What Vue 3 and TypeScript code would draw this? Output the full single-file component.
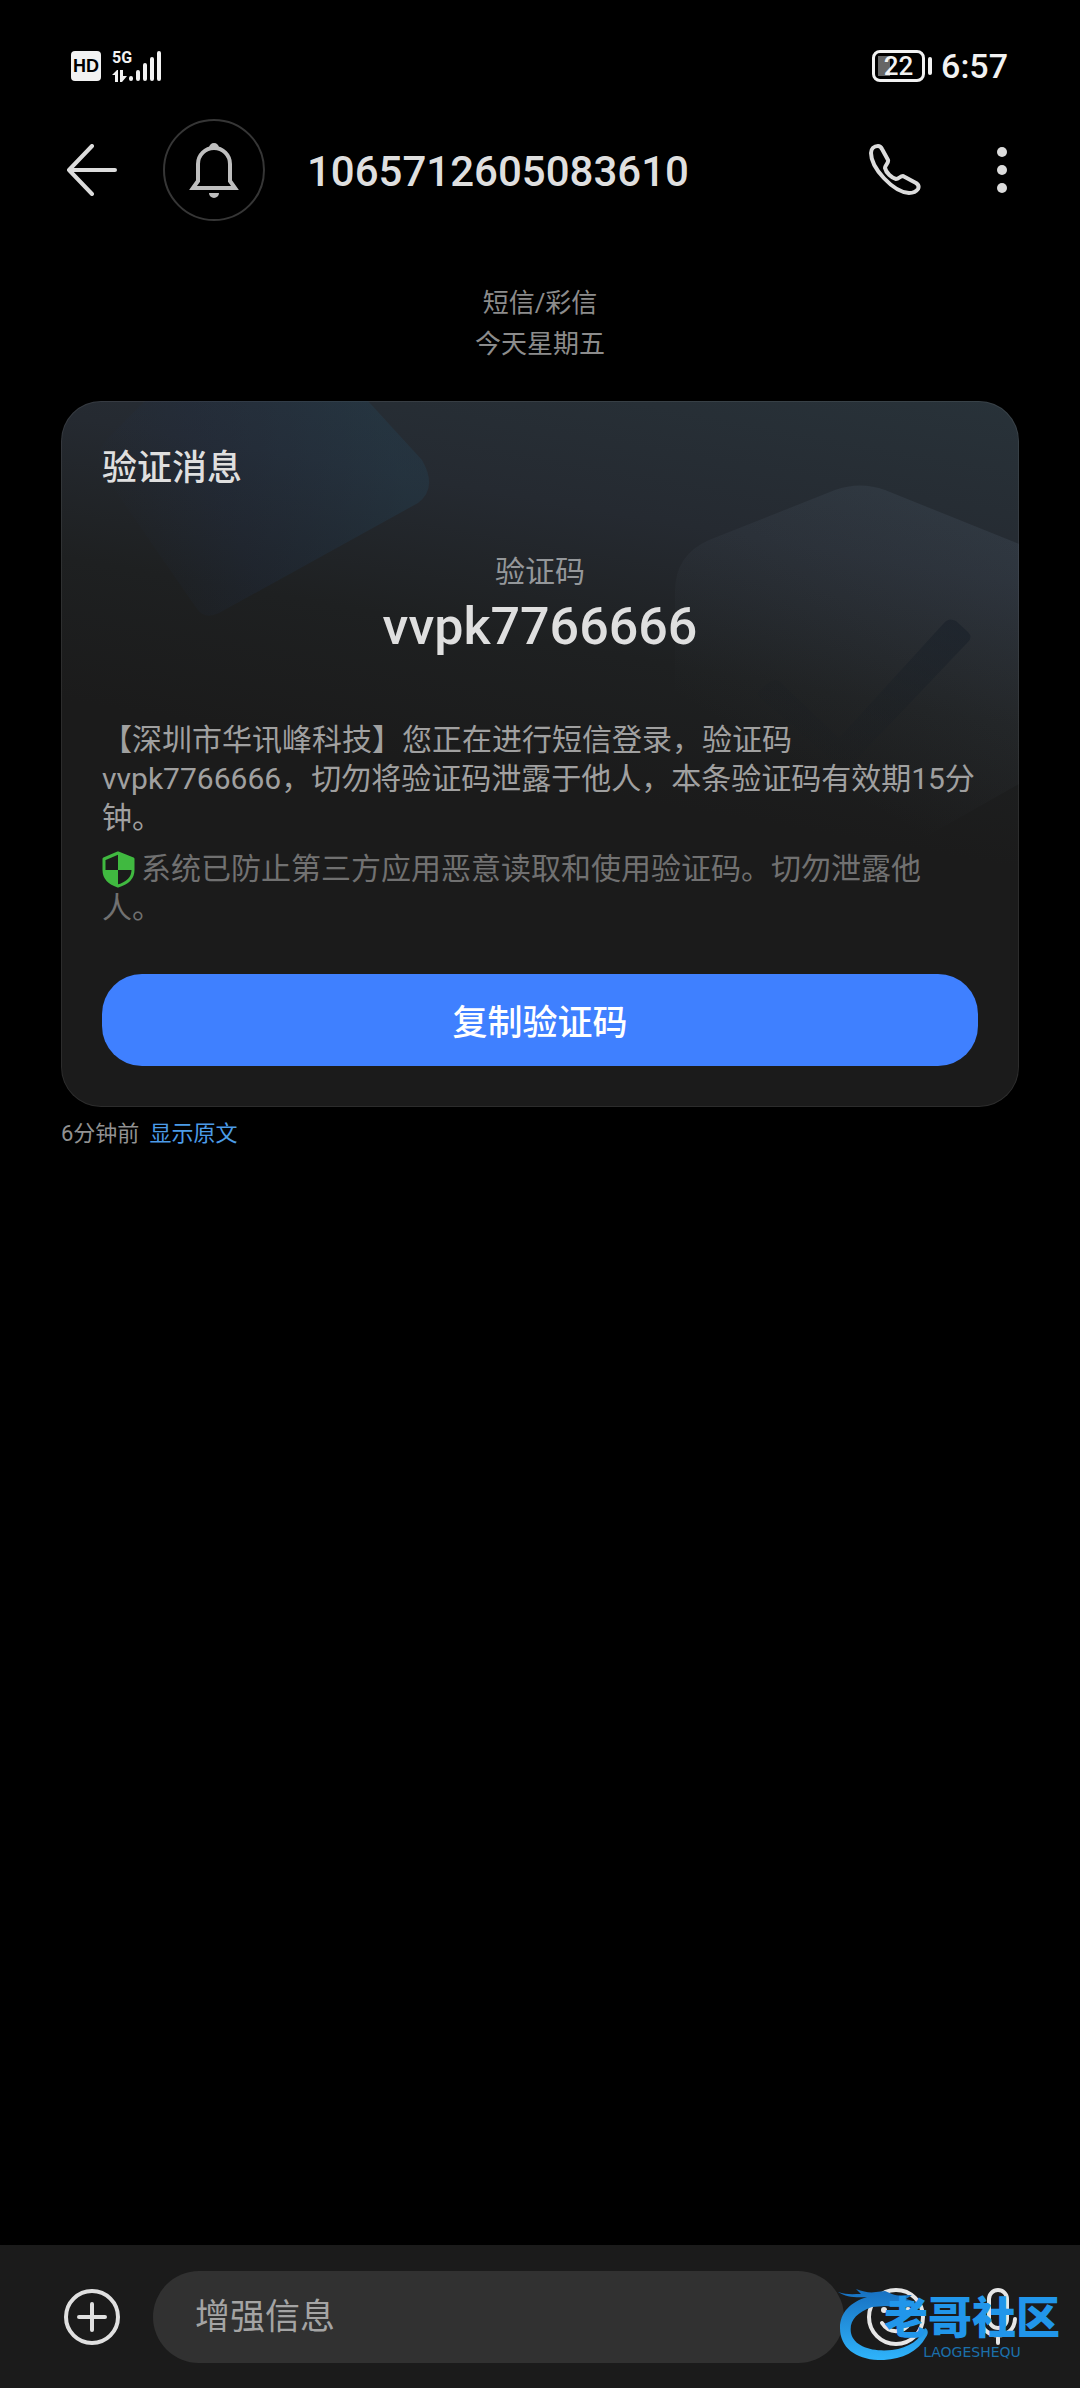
<script setup lang="ts">
import { ref } from 'vue'

const sender = '1065712605083610'
const code = 'vvpk7766666'
const draft = ref('')
const battery = 22

function copyCode(): void {
  navigator.clipboard?.writeText(code)
}
</script>

<template>
  <div class="screen">
    <div class="status">
      <div class="status-group">
        <span class="hd">HD</span>
        <span class="network">
          <span class="gen">5G</span>
          <svg width="16" height="12" viewBox="0 0 16 12" fill="#f2f2f2">
            <path d="M0 5 5 0h1v12H3V5zM8 0h3v6h4l-5 6H8z" />
          </svg>
        </span>
        <svg class="bars" width="34" height="32" viewBox="0 0 34 32" stroke="#f2f2f2" stroke-width="4" stroke-linecap="round">
          <path d="M3 28v1M10 22v7M17 15v14M24 9v20M31 3v26" />
        </svg>
      </div>
      <div class="status-group">
        <span class="battery">{{ battery }}</span>
        <span class="nub"></span>
        <time class="clock">6:57</time>
      </div>
    </div>

    <header class="bar">
      <button class="icon back" aria-label="返回">
        <svg width="52" height="52" viewBox="0 0 52 52" fill="none" stroke="#dcdcdc" stroke-width="4" stroke-linecap="round" stroke-linejoin="round">
          <path d="M26 2 3 26l23 24M3 26h46" />
        </svg>
      </button>
      <span class="avatar">
        <svg width="50" height="58" viewBox="0 0 50 58" fill="none" stroke="#bebebe" stroke-width="4">
          <path d="M4 47 9 40V23a16 16 0 0 1 32 0v17l5 7z" />
          <path d="M20 7a5 5 0 0 1 10 0zM20 52h10a5 5 0 0 1-10 0z" fill="#bebebe" stroke="none" />
        </svg>
      </span>
      <h1 class="sender">{{ sender }}</h1>
      <button class="icon" aria-label="拨打电话">
        <svg width="52" height="52" viewBox="0 0 52 52" fill="none" stroke="#dcdcdc" stroke-width="4" stroke-linejoin="round">
          <path d="M2 9C2 5 5 2 9 2c2 0 3 1 4 3l6 11c1 3-3 5-3 8 1 5 7 10 11 11 3 0 4-3 7-3l13 7c3 2 3 4 2 6-2 3-5 4-9 4C24 48 2 24 2 9z" />
        </svg>
      </button>
      <button class="icon more" aria-label="更多">
        <svg width="10" height="48" viewBox="0 0 10 48" fill="#dcdcdc">
          <circle cx="5" cy="6" r="5" /><circle cx="5" cy="24" r="5" /><circle cx="5" cy="42" r="5" />
        </svg>
      </button>
    </header>

    <main class="thread">
      <p class="day">短信/彩信<br />今天星期五</p>

      <article class="card">
        <svg class="art art-left" width="380" height="230" viewBox="0 0 380 230">
          <defs>
            <linearGradient id="tile" x1="320" y1="20" x2="50" y2="120" gradientUnits="userSpaceOnUse">
              <stop offset="0" stop-color="#24455a" stop-opacity=".32" />
              <stop offset=".6" stop-color="#20304c" stop-opacity=".24" />
              <stop offset="1" stop-color="#20304c" stop-opacity="0" />
            </linearGradient>
          </defs>
          <path fill="url(#tile)" d="M84 0H307l54 59q16 28-4 43L158 212q-14 7-22-4L42 72q-10-18 4-34z" />
        </svg>
        <svg class="art art-right" width="344" height="480" viewBox="0 0 344 480">
          <defs>
            <linearGradient id="hex" x1="290" y1="90" x2="130" y2="370" gradientUnits="userSpaceOnUse">
              <stop offset="0" stop-color="#70859c" stop-opacity=".14" />
              <stop offset=".5" stop-color="#6a7a8c" stop-opacity=".08" />
              <stop offset="1" stop-color="#6a7a8c" stop-opacity="0" />
            </linearGradient>
            <linearGradient id="tick" x1="290" y1="220" x2="180" y2="400" gradientUnits="userSpaceOnUse">
              <stop offset="0" stop-color="#161e28" stop-opacity=".55" />
              <stop offset="1" stop-color="#161b20" stop-opacity="0" />
            </linearGradient>
          </defs>
          <path fill="url(#hex)" d="M0 190q0-36 34-51l126-50q25-9 50 0l134 54v240l-134 76q-24 10-50 0L34 390Q0 374 0 340z" />
          <path fill="url(#tick)" d="m85 289 11-9q5-3 9 1l59 56 105-115q5-6 12-2l12 11q5 5 0 10L178 362q-9 9-18 0l-75-65q-4-4 0-8z" />
        </svg>

        <div class="content">
          <h2 class="title">验证消息</h2>
          <p class="label">验证码</p>
          <p class="code">{{ code }}</p>
          <p class="body">【深圳市华讯峰科技】您正在进行短信登录，验证码{{ code }}，切勿将验证码泄露于他人，本条验证码有效期15分钟。</p>
          <p class="body notice">
            <svg class="shield" width="33" height="37" viewBox="0 0 33 37"><path fill="none" stroke="#40b940" stroke-width="3" stroke-linejoin="round" d="M16 2 2 8v11c0 8 5 13 14 16 10-3 15-8 15-16V8z" /><path fill="#40b940" d="M16 2v17H2c0 8 5 13 14 16V19h15V8z" /></svg>系统已防止第三方应用恶意读取和使用验证码。切勿泄露他人。
          </p>
          <button class="copy" @click="copyCode">复制验证码</button>
        </div>
      </article>

      <p class="meta"><span>6分钟前</span><a href="#original">显示原文</a></p>
    </main>

    <footer class="composer">
      <button class="icon" aria-label="添加">
        <svg width="56" height="56" viewBox="0 0 56 56" fill="none" stroke="#e0e0e0" stroke-width="4" stroke-linecap="round">
          <circle cx="28" cy="28" r="26" /><path d="M28 15v26M15 28h26" />
        </svg>
      </button>
      <input v-model="draft" class="field" type="text" placeholder="增强信息" aria-label="增强信息" />
      <button class="icon smile" aria-label="表情">
        <svg width="58" height="58" viewBox="0 0 58 58" fill="none" stroke="#e6e6e6" stroke-width="4" stroke-linecap="round">
          <circle cx="29" cy="29" r="27" /><path d="M15 35c7 11 21 11 28 0" />
          <g fill="#e6e6e6" stroke="none"><circle cx="17" cy="22" r="3" /><circle cx="41" cy="22" r="3" /></g>
        </svg>
      </button>
      <button class="icon mic" aria-label="语音">
        <svg width="40" height="58" viewBox="0 0 40 58" fill="none" stroke="#e6e6e6" stroke-width="4" stroke-linecap="round">
          <rect x="11" y="2" width="18" height="38" rx="9" /><path d="M3 31c1 22 33 22 34 0M20 48v7" />
        </svg>
      </button>

      <div class="brand">
        <svg class="swirl" width="96" height="74" viewBox="0 0 96 74">
          <defs>
            <linearGradient id="wave" x1="0" y1="0" x2="0" y2="1">
              <stop offset="0" stop-color="#176fc0" /><stop offset="1" stop-color="#2fb4fb" />
            </linearGradient>
          </defs>
          <path fill="url(#wave)" d="M0 6c8 3 16 2 23 2l-5-5c8 3 14 4 20 3l9-1 7 3c7 3 14 1 20 1l-6 4 7 2-10 2 5 4c-9-1-15 0-22-1l-14 1C18 27 11 35 13 47c3 14 22 19 41 17 17-2 29-11 33-22 4 2 3 6 1 9-8 15-24 22-42 23C20 75 2 63 2 42 2 26 13 16 29 11 18 12 8 11 0 6z" />
        </svg>
        <div class="brand-text">
          <span class="brand-name">老哥社区</span>
          <span class="brand-latin">LAOGESHEQU</span>
        </div>
      </div>
    </footer>
  </div>
</template>

<style>
body {
  margin: 0;
  background: #000;
}
</style>

<style scoped>
.screen {
  display: flex;
  flex-direction: column;
  min-height: 100vh;
  background: #000;
  color: #dfdfdf;
  font-family: Roboto, "Noto Sans CJK SC", sans-serif;
}
h1, h2, p {
  margin: 0;
}
button {
  padding: 0;
  border: 0;
  background: none;
  font-family: inherit;
}
svg {
  display: block;
}
.icon {
  flex: none;
  cursor: pointer;
}
.status {
  display: flex;
  justify-content: space-between;
  align-items: center;
  height: 40px;
  padding: 46px 72px 0 71px;
}
.status-group {
  display: flex;
  align-items: center;
  color: #f2f2f2;
}
.hd {
  width: 30px;
  border-radius: 4px;
  background: #f2f2f2;
  color: #000;
  font: bold 18px/30px "Liberation Sans", sans-serif;
  text-align: center;
}
.network {
  display: flex;
  flex-direction: column;
  gap: 4px;
  margin-left: 11px;
}
.gen {
  font-size: 16px;
  font-weight: 700;
  line-height: 16px;
}
.bars {
  margin-left: -4px;
}
.battery {
  box-sizing: border-box;
  width: 53px;
  height: 32px;
  border: 3px solid #f2f2f2;
  border-radius: 8px;
  background: linear-gradient(#666, #666) 3px center / 12px 20px no-repeat;
  font-size: 26px;
  font-weight: 500;
  line-height: 26px;
  text-align: center;
}
.nub {
  width: 4px;
  height: 18px;
  margin-left: 3px;
  border-radius: 2px;
  background: #f2f2f2;
}
.clock {
  margin-left: 9px;
  font-size: 34px;
  font-weight: 500;
  line-height: 40px;
}
.bar {
  display: flex;
  align-items: center;
  height: 104px;
  margin-top: 32px;
  padding: 0 73px 0 66px;
}
.avatar {
  display: flex;
  box-sizing: border-box;
  justify-content: center;
  align-items: center;
  width: 102px;
  height: 102px;
  margin-left: 45px;
  border: 2px solid #363636;
  border-radius: 50%;
}
.sender {
  flex: 1;
  margin-left: 42px;
  padding-top: 4px;
  font-size: 42px;
  font-weight: 500;
  line-height: 56px;
}
.more {
  margin-left: 76px;
}
.thread {
  flex: 1;
  padding: 61px 61px 60px;
}
.day {
  color: #8c8c8c;
  font-size: 26px;
  line-height: 41px;
  text-align: center;
}
.card {
  position: relative;
  overflow: hidden;
  margin-top: 36px;
  border-radius: 40px;
  background: linear-gradient(190deg, #283239 0, #252a31 180px, #1e2021 320px, #1b1b1b 460px);
  box-shadow: inset 0 0 0 1px #ffffff14;
}
.art {
  position: absolute;
  top: 0;
}
.art-left {
  left: 0;
}
.art-right {
  right: 0;
}
.content {
  position: relative;
  padding: 45px 41px 41px;
}
.title {
  font-size: 35px;
  font-weight: 500;
  line-height: 46px;
}
.label {
  margin-top: 60px;
  color: #94979a;
  font-size: 30px;
  line-height: 40px;
  text-align: center;
}
.code {
  margin-top: 4px;
  font-size: 52px;
  font-weight: 500;
  line-height: 62px;
  text-align: center;
}
.body {
  margin-top: 62px;
  color: #a0a0a0;
  font-size: 30px;
  line-height: 39px;
}
.notice {
  margin-top: 12px;
  color: #717171;
}
.shield {
  display: inline-block;
  margin: -4px 6px 0 0;
  vertical-align: middle;
}
.copy {
  width: 100%;
  height: 92px;
  margin-top: 47px;
  padding-bottom: 2px;
  border-radius: 40px;
  background: #3f80ff;
  color: #fff;
  font-size: 35px;
  font-weight: 500;
  cursor: pointer;
}
.meta {
  display: flex;
  gap: 10px;
  margin-top: 10px;
  color: #929292;
  font-size: 22px;
  line-height: 34px;
}
.meta a {
  color: #4c9ce8;
  text-decoration: none;
}
.composer {
  position: relative;
  display: flex;
  align-items: center;
  box-sizing: border-box;
  height: 143px;
  padding: 0 62px 0 64px;
  background: #1b1b1b;
}
.field {
  flex: 1;
  box-sizing: border-box;
  min-width: 0;
  height: 92px;
  margin-left: 33px;
  padding: 2px 42px 0;
  border: 0;
  border-radius: 46px;
  outline: 0;
  background: #313131;
  color: #dfdfdf;
  font-family: inherit;
  font-size: 35px;
}
.field::placeholder {
  color: #a4a4a4;
  opacity: 1;
}
.smile {
  margin-left: 23px;
}
.mic {
  margin-left: 53px;
}
.brand {
  position: absolute;
  right: 20px;
  bottom: 28px;
  display: flex;
  color: #2196ea;
  pointer-events: none;
}
.brand-text {
  display: flex;
  flex-direction: column;
  align-items: center;
  margin: 8px 0 0 -50px;
}
.brand-name {
  font-size: 44px;
  font-weight: 900;
  line-height: 50px;
}
.brand-latin {
  color: #1b70ab;
  font: 14px/16px "DejaVu Sans", sans-serif;
}
</style>
